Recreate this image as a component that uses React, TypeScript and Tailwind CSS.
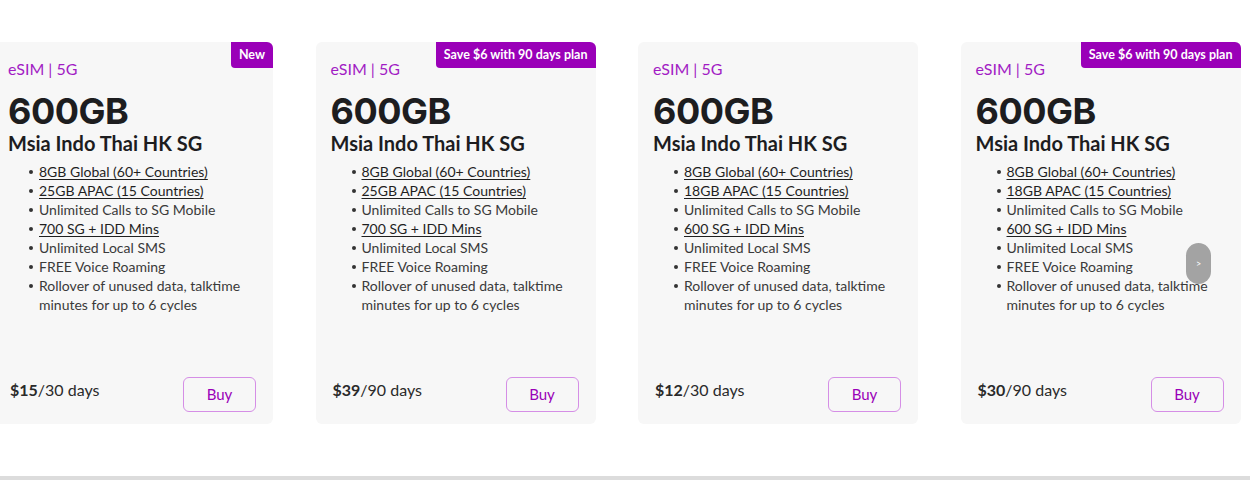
const plans = [
  {
    badge: "New",
    apac: "25GB APAC (15 Countries)",
    mins: "700 SG + IDD Mins",
    price: "$15",
    period: "/30 days",
  },
  {
    badge: "Save $6 with 90 days plan",
    apac: "25GB APAC (15 Countries)",
    mins: "700 SG + IDD Mins",
    price: "$39",
    period: "/90 days",
  },
  {
    badge: "",
    apac: "18GB APAC (15 Countries)",
    mins: "600 SG + IDD Mins",
    price: "$12",
    period: "/30 days",
  },
  {
    badge: "Save $6 with 90 days plan",
    apac: "18GB APAC (15 Countries)",
    mins: "600 SG + IDD Mins",
    price: "$30",
    period: "/90 days",
  },
]

function Item({ children, link }: { children: React.ReactNode; link?: boolean }) {
  return (
    <li className="flex">
      <span className="w-[31px] shrink-0 pl-[21px] pt-[8px]">
        <span className="block w-[4px] h-[4px] rounded-full bg-[#333]" />
      </span>
      <span className={link ? "underline underline-offset-2 text-[#1f1f1f]" : "text-[#3a3a3a]"}>{children}</span>
    </li>
  )
}

function PlanCard({ plan }: { plan: (typeof plans)[number] }) {
  return (
    <div className="relative w-[280px] h-[382px] shrink-0 rounded-[6px] bg-[#f7f7f7] flex flex-col pl-[15px] pr-[17px] pb-[12px]">
      {plan.badge && (
        <div className="absolute top-0 right-0 h-[26px] px-[8px] flex items-center rounded-tr-[6px] rounded-bl-[4px] bg-[#9a00b8] text-white text-[12.5px] font-bold">
          {plan.badge}
        </div>
      )}
      <div className="mt-[17px] text-[16px] leading-[20px] text-[#a21cc4]">eSIM | 5G</div>
      <div className="mt-[12px] text-[36px] leading-[40px] font-bold text-[#1d1d1f] tracking-[-0.5px]" style={{ fontFamily: "Inter, sans-serif" }}>
        600GB
      </div>
      <div className="-mt-[1px] text-[20px] leading-[26px] font-bold text-[#1d1d1f]">Msia Indo Thai HK SG</div>
      <ul className="mt-[6px] text-[14px] leading-[19px]">
        <Item link>8GB Global (60+ Countries)</Item>
        <Item link>{plan.apac}</Item>
        <Item>Unlimited Calls to SG Mobile</Item>
        <Item link>{plan.mins}</Item>
        <Item>Unlimited Local SMS</Item>
        <Item>FREE Voice Roaming</Item>
        <Item>
          Rollover of unused data, talktime
          <br />
          minutes for up to 6 cycles
        </Item>
      </ul>
      <div className="mt-auto flex items-start justify-between">
        <div className="pl-[2px] pt-[1px] text-[16px] text-[#2a2a2a]">
          <span className="font-bold">{plan.price}</span>
          {plan.period}
        </div>
        <button className="w-[73px] h-[35px] rounded-[6px] border border-[#d58ee6] text-[#9a00b8] text-[15px]">
          Buy
        </button>
      </div>
    </div>
  )
}

export default function App() {
  return (
    <div className="relative w-[1250px] h-[480px] bg-white overflow-hidden" style={{ fontFamily: "Lato, 'Noto Sans', sans-serif" }}>
      <div className="flex gap-[42.5px] -ml-[7px] pt-[42px]">
        {plans.map((p, i) => (
          <PlanCard key={i} plan={p} />
        ))}
      </div>
      <button className="absolute left-[1186px] top-[243px] w-[25px] h-[41px] rounded-full bg-[#a3a3a3] text-white text-[9px] flex items-center justify-center">
        &gt;
      </button>
      <div className="absolute left-0 bottom-0 w-full h-[4px] bg-[#dcdcdc]" />
    </div>
  )
}
